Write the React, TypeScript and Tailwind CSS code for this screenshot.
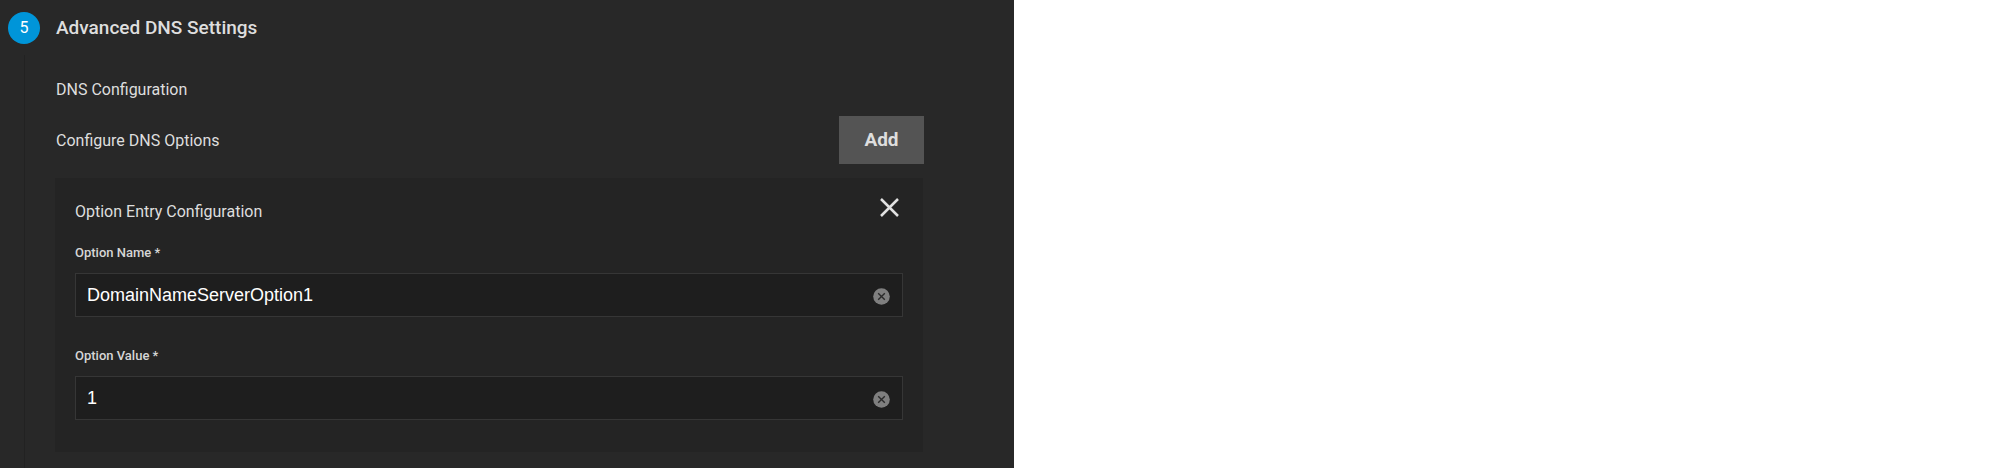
import { useId, useState } from "react";

function ClearIcon() {
  return (
    <svg viewBox="0 0 17 17" className="size-[17px]" aria-hidden="true">
      <circle cx="8.5" cy="8.5" r="8.3" fill="#7f7f7f" />
      <path d="M5.2 5.2l6.6 6.6M11.8 5.2l-6.6 6.6" stroke="#2a2a2a" strokeWidth="1.4" />
    </svg>
  );
}

function TextField({ label, initial }: { label: string; initial: string }) {
  const id = useId();
  const [value, setValue] = useState(initial);
  return (
    <div>
      <label htmlFor={id} className="block text-[13px] leading-5 font-medium text-[#d6d6d6]">
        {label} *
      </label>
      <div className="mt-[10px] flex h-11 items-center border border-[#363636] bg-[#1e1e1e] pr-3">
        <input
          id={id}
          type="text"
          value={value}
          onChange={(e) => setValue(e.target.value)}
          className="h-full min-w-0 flex-1 bg-transparent px-[11px] font-['Liberation_Sans',sans-serif] text-lg text-white outline-none"
        />
        <button type="button" aria-label={`Clear ${label}`} className="pt-[2px]" onClick={() => setValue("")}>
          <ClearIcon />
        </button>
      </div>
    </div>
  );
}

export default function App() {
  return (
    <main className="min-h-screen bg-white font-[Roboto,sans-serif] text-[#dedede]">
      <section className="flex min-h-screen w-full max-w-[1014px] gap-4 bg-[#282828] pt-3 pl-2">
        <div className="flex w-8 shrink-0 flex-col items-center gap-[11px]">
          <span className="flex size-8 items-center justify-center rounded-full bg-[#0095d9] text-base text-white">
            5
          </span>
          <span className="w-px flex-1 bg-[#222222]" />
        </div>
        <div className="min-w-0 flex-1 pr-[90px] pb-4">
          <h2 className="text-[19px] leading-8 font-medium">Advanced DNS Settings</h2>
          <h3 className="mt-[34px] text-base leading-6">DNS Configuration</h3>
          <div className="mt-[14px] flex items-center justify-between">
            <p className="pt-[2px] text-base leading-6">Configure DNS Options</p>
            <button type="button" className="h-12 w-[85px] bg-[#545454] text-[19px] font-bold">
              Add
            </button>
          </div>
          <div className="mt-[14px] mr-px -ml-px flex flex-col bg-[#242424] px-5 pt-4 pb-8">
            <div className="flex items-start justify-between">
              <h4 className="pt-[6px] text-base leading-6">Option Entry Configuration</h4>
              <button type="button" aria-label="Remove option entry" className="p-1">
                <svg viewBox="0 0 19 19" className="size-[19px]" aria-hidden="true">
                  <path d="M1 1l17 17M18 1L1 18" stroke="#e2e2e2" strokeWidth="2.5" />
                </svg>
              </button>
            </div>
            <div className="mt-[19px] flex flex-col gap-[29px]">
              <TextField label="Option Name" initial="DomainNameServerOption1" />
              <TextField label="Option Value" initial="1" />
            </div>
          </div>
        </div>
      </section>
    </main>
  );
}
